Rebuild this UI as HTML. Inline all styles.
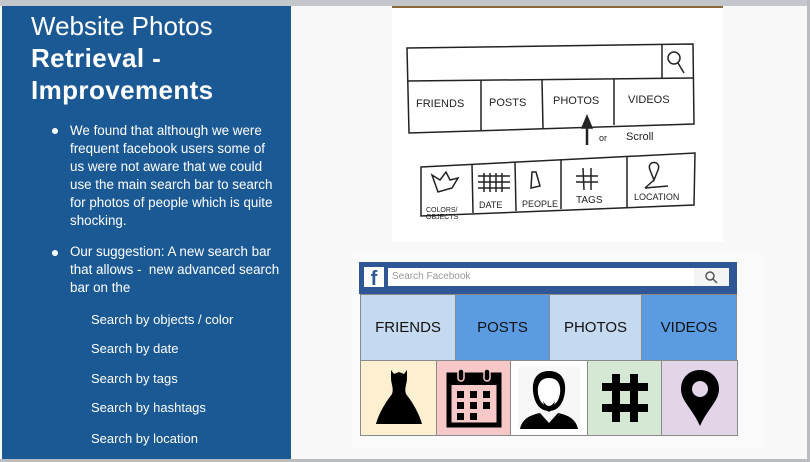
<!DOCTYPE html>
<html><head><meta charset="utf-8"><style>
*{margin:0;padding:0;box-sizing:border-box}
body{width:810px;height:462px;position:relative;overflow:hidden;background:#f8f8f8;font-family:"Liberation Sans",Arial,sans-serif}
.topbar{position:absolute;left:0;top:0;width:810px;height:6px;background:#c3c6cb}
.botbar{position:absolute;left:0;top:459px;width:810px;height:3px;background:#b9bcc1}
.rbar{position:absolute;left:807px;top:0;width:3px;height:462px;background:#b9bcc1}
.panel{position:absolute;left:2px;top:6px;width:289px;height:453px;background:#1b5995;color:#fff}
.t{position:absolute;left:29px;font-size:26px;line-height:32px;white-space:nowrap}
.b{position:absolute;left:68px;font-size:13.4px;line-height:18px;width:206px}
.dot{position:absolute;left:50px;width:6px;height:6px;border-radius:50%;background:#fff}
.s{position:absolute;left:89px;font-size:13px;white-space:nowrap}
.abs{position:absolute}
.fbh{left:359px;top:262px;width:378px;height:32px;background:#2f5796}
.cell{position:absolute;border:1px solid #8a8a8a;display:flex;align-items:center;justify-content:center;font-size:15px;color:#111}
</style></head><body>
<div class="topbar"></div>
<div class="panel">
<div class="t" style="top:4px">Website Photos</div>
<div class="t" style="top:36px;font-weight:bold;letter-spacing:0.4px">Retrieval -</div>
<div class="t" style="top:68px;font-weight:bold;letter-spacing:0.4px">Improvements</div>
<div class="dot" style="top:122px"></div>
<div class="b" style="top:116px">We found that although we were frequent facebook users some of us were not aware that we could use the main search bar to search for photos of people which is quite shocking.</div>
<div class="dot" style="top:244px"></div>
<div class="b" style="top:237px;width:222px">Our suggestion: A new search bar that allows -&nbsp; new advanced search bar on the</div>
<div class="s" style="top:306px">Search by objects / color</div>
<div class="s" style="top:335px">Search by date</div>
<div class="s" style="top:365px">Search by tags</div>
<div class="s" style="top:394px">Search by hashtags</div>
<div class="s" style="top:425px">Search by location</div>
</div>
<div class="abs" style="left:392px;top:6px;width:331px;height:236px;background:#fff"></div>
<div class="abs" style="left:392px;top:6px;width:331px;height:2px;background:#8a6a3a"></div>
<svg class="abs" style="left:0;top:0" width="810" height="462" fill="none" stroke="#222" stroke-width="1.5">
<path d="M407 48 L693 44 L694 124 L409 133 Z"/>
<path d="M408 81 L693 78"/>
<path d="M662 45 L662 78"/>
<circle cx="674" cy="58" r="6"/><path d="M678 63 L684 73"/>
<path d="M481 80 L481 130 M542 80 L543 128 M614 79 L614 125"/>
<path d="M421 167 L695 153 L694 205 L421 216 Z"/>
<path d="M472 164 L473 213 M515 162 L516 211 M561 160 L561 209 M627 157 L627 207"/>
<path d="M478 176 L510 176 M478 182 L510 182 M478 188 L510 188 M484 173 L484 192 M490 173 L490 192 M496 173 L496 192 M502 173 L502 192"/>
<path d="M532 172 L536 172 L540 186 L531 188 Z"/>
<path d="M576 176 L598 176 M576 182 L598 182 M583 168 L584 190 M591 168 L591 190"/>
<path d="M650 170 C646 160 662 160 658 170 L654 180 Z M645 188 L668 186 M645 188 L654 180"/>
<path d="M432 175 L440 180 L446 172 L450 180 L458 178 L452 188 L438 192 Z"/>
<path d="M587 118 L587 145" stroke-width="2.5"/><path d="M582 128 L587 116 L592 128 Z" fill="#222"/>
<g fill="#222" stroke="none" font-family="Liberation Sans" font-size="11">
<text x="416" y="107">FRIENDS</text><text x="489" y="106">POSTS</text><text x="553" y="104">PHOTOS</text><text x="628" y="103">VIDEOS</text>
<text x="599" y="141" font-size="9">or</text><text x="626" y="140">Scroll</text>
<text x="479" y="208" font-size="9">DATE</text><text x="522" y="207" font-size="9">PEOPLE</text><text x="576" y="203" font-size="10">TAGS</text><text x="634" y="200" font-size="9">LOCATION</text>
<text x="426" y="212" font-size="7">COLORS/</text><text x="426" y="219" font-size="7">OBJECTS</text>
</g>
</svg>
<div class="abs" style="left:352px;top:253px;width:412px;height:195px;background:#fafafa"></div>
<div class="abs fbh"></div>
<div class="abs" style="left:364px;top:267px;width:20px;height:20px;background:#fff;font:bold 20px 'Liberation Sans';color:#2f5796;text-align:center;line-height:24px;overflow:hidden">f</div>
<div class="abs" style="left:388px;top:268px;width:341px;height:18px;background:#fff;font-size:10px;color:#999;padding:3px 0 0 4px">Search Facebook</div>
<div class="abs" style="left:694px;top:268px;width:35px;height:18px;background:#f4f4f4"></div>
<svg class="abs" style="left:704px;top:270px" width="14" height="14" fill="none" stroke="#555" stroke-width="1.5"><circle cx="6" cy="6" r="4"/><path d="M9 9 L13 13"/></svg>
<div class="cell" style="left:360px;top:294px;width:96px;height:67px;background:#c5d9f1">FRIENDS</div>
<div class="cell" style="left:455px;top:294px;width:95px;height:67px;background:#5b9be1">POSTS</div>
<div class="cell" style="left:549px;top:294px;width:93px;height:67px;background:#c5d9f1">PHOTOS</div>
<div class="cell" style="left:641px;top:294px;width:96px;height:67px;background:#5b9be1">VIDEOS</div>
<div class="cell" style="left:360px;top:360px;width:77px;height:76px;background:#fdf0d1">
<svg width="50" height="60" viewBox="0 0 50 60"><path d="M17 2 L17 10 C17 16 20 20 18 26 C10 36 4 48 2 56 L48 56 C46 48 40 36 32 26 C30 20 33 16 33 10 L33 2 L30 6 L25 4 L20 6 Z" fill="#000"/></svg></div>
<div class="cell" style="left:436px;top:360px;width:75px;height:76px;background:#f7c8c8">
<svg width="56" height="62" viewBox="0 0 56 62"><rect x="3" y="8" width="50" height="50" fill="none" stroke="#000" stroke-width="5"/><rect x="3" y="8" width="50" height="10" fill="#000"/><rect x="12" y="2" width="6" height="12" rx="3" fill="#000" stroke="#f7c8c8" stroke-width="1.5"/><rect x="38" y="2" width="6" height="12" rx="3" fill="#000" stroke="#f7c8c8" stroke-width="1.5"/><g fill="#000"><rect x="11" y="24" width="7" height="7"/><rect x="24" y="24" width="7" height="7"/><rect x="37" y="24" width="7" height="7"/><rect x="11" y="35" width="7" height="7"/><rect x="24" y="35" width="7" height="7"/><rect x="37" y="35" width="7" height="7"/><rect x="11" y="46" width="7" height="7"/><rect x="24" y="46" width="7" height="7"/></g></svg></div>
<div class="cell" style="left:510px;top:360px;width:78px;height:76px;background:#fff">
<svg width="66" height="66" viewBox="0 0 66 66"><rect x="2" y="2" width="62" height="62" fill="#f7f7f7"/><path d="M33 6 C20 6 16 16 17 26 C18 38 24 46 33 46 C42 46 48 38 49 26 C50 16 46 6 33 6 Z" fill="#000"/><path d="M33 13 C24 13 21 20 22 28 C23 36 27 41 33 41 C39 41 43 36 44 28 C45 20 42 13 33 13 Z" fill="#fff"/><path d="M27 36 Q33 46 39 36 L37 44 L33 47 L29 44 Z" fill="#000"/><path d="M4 64 C6 54 14 50 24 48 L33 58 L42 48 C52 50 60 54 62 64 Z" fill="#000"/></svg></div>
<div class="cell" style="left:587px;top:360px;width:75px;height:76px;background:#d5e8d4">
<svg width="50" height="52" viewBox="0 0 50 52"><path d="M2 15 H48 M2 36 H48 M16 2 V50 M34 2 V50" stroke="#000" stroke-width="8"/></svg></div>
<div class="cell" style="left:661px;top:360px;width:77px;height:76px;background:#e1d5e7">
<svg width="42" height="60" viewBox="0 0 42 60"><path d="M21 2 C10 2 2 10 2 21 C2 33 13 40 21 58 C29 40 40 33 40 21 C40 10 32 2 21 2 Z" fill="#000"/><circle cx="21" cy="21" r="8" fill="#e1d5e7"/></svg></div>
<div class="botbar"></div>
<div class="rbar"></div>
</body></html>
